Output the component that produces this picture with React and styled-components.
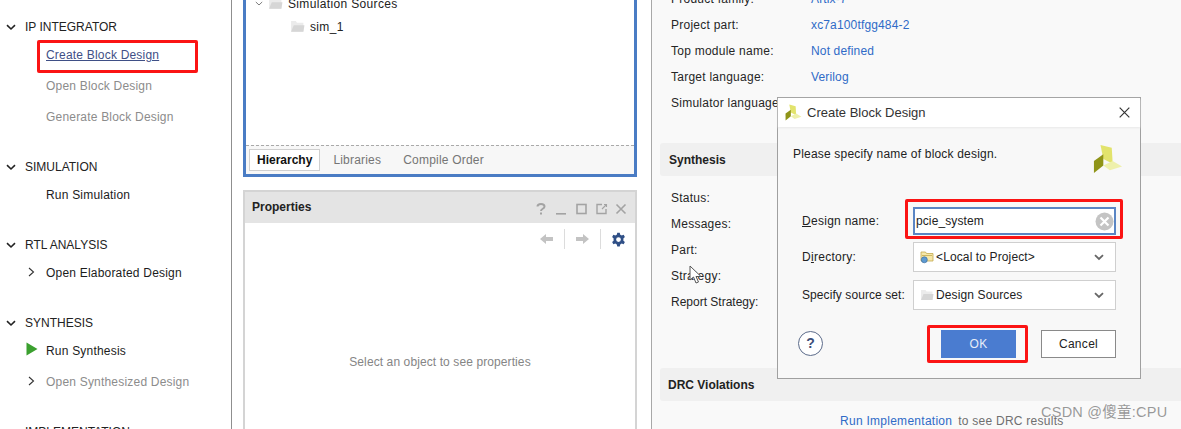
import React from "react";
import styled, { createGlobalStyle } from "styled-components";

const Global = createGlobalStyle`
  html, body { margin: 0; padding: 0; background: #fff; }
  body { font-family: "Liberation Sans", Arial, sans-serif; font-size: 12px; color: #222; }
`;

const Page = styled.div`
  position: relative;
  width: 1181px;
  height: 429px;
  overflow: hidden;
  display: grid;
  grid-template-columns: 232px 420px 1fr;
`;

/* ---------- flow navigator ---------- */
const Nav = styled.nav`
  border-right: 1px solid #8f8f8f;
  background: #fff;
  padding-top: 14px;
  display: flex;
  flex-direction: column;
  gap: 21px;
  overflow: hidden;
`;
const NavSection = styled.section`
  display: flex;
  flex-direction: column;
  flex: none;
`;
const NavHeader = styled.div`
  height: 26px;
  display: flex;
  align-items: center;
  gap: 9px;
  padding-left: 6px;
  font-size: 12px;
  color: #222;
`;
const NavItem = styled.div`
  height: 31px;
  box-sizing: border-box;
  display: flex;
  align-items: center;
  position: relative;
  padding: 0 0 2px 46px;
  font-size: 12px;
  letter-spacing: 0.2px;
  color: ${(p) => (p.$muted ? "#8c8c8c" : p.$link ? "#3f4f86" : "#1c1c1c")};
  text-decoration: ${(p) => (p.$link ? "underline" : "none")};
`;
const ItemIcon = styled.span`
  position: absolute;
  left: ${(p) => p.$left || 26}px;
  top: ${(p) => p.$top || 9}px;
  display: flex;
`;
const RedBox = styled.span`
  position: absolute;
  left: ${(p) => p.$l}px;
  top: ${(p) => p.$t}px;
  width: ${(p) => p.$w}px;
  height: ${(p) => p.$h}px;
  box-sizing: border-box;
  border: 3px solid #fb1414;
  border-radius: 2px;
  pointer-events: none;
`;

/* ---------- centre column ---------- */
const Middle = styled.div`
  border-right: 1px solid #a8a8a8;
  background: #fff;
  padding: 0 14px 0 11px;
  display: flex;
  flex-direction: column;
  gap: 13px;
`;
const SourcesPanel = styled.div`
  height: 177px;
  box-sizing: border-box;
  border: 3px solid #4a7cc4;
  border-top: none;
  background: #fff;
  display: flex;
  flex-direction: column;
`;
const Tree = styled.div`
  flex: 1;
  margin-top: -8px;
  font-size: 12px;
  letter-spacing: 0.35px;
`;
const TreeRow = styled.div`
  height: 23px;
  display: flex;
  align-items: center;
  gap: 5px;
  padding-left: ${(p) => p.$indent}px;
  color: #222;
`;
const TabBar = styled.div`
  height: 29px;
  background: #f7f7f7;
  border-top: 1px dashed #a9a9a9;
  display: flex;
  align-items: center;
  padding-left: 3px;
  gap: 13px;
  box-sizing: border-box;
`;
const Tab = styled.div`
  font-size: 12px;
  letter-spacing: 0.2px;
  color: ${(p) => (p.$active ? "#111" : "#757575")};
  font-weight: ${(p) => (p.$active ? 700 : 400)};
  ${(p) =>
    p.$active
      ? `background:#fff;border:1px solid #cfcfcf;padding:3px 7px;letter-spacing:0;`
      : `padding:3px 0;margin-right:9px;`}
`;
const PropsPanel = styled.div`
  flex: 1;
  min-height: 0;
  box-sizing: border-box;
  border: 2px solid #d4d4d4;
  border-bottom: none;
  display: flex;
  flex-direction: column;
`;
const PropsHead = styled.div`
  height: 31px;
  box-sizing: border-box;
  background: #e4e4e4;
  display: flex;
  align-items: center;
  justify-content: space-between;
  padding: 0 7px 2px 7px;
  font-weight: 700;
  font-size: 12px;
  color: #222;
`;
const HeadIcons = styled.div`
  display: flex;
  align-items: center;
  gap: 4px;
  margin-top: 5px;
  & > svg:first-child {
    margin-right: 2px;
  }
`;
const PropsTools = styled.div`
  height: 32px;
  display: flex;
  align-items: center;
  justify-content: flex-end;
  padding-right: 9px;
`;
const ToolSep = styled.span`
  width: 1px;
  height: 20px;
  background: #dcdcdc;
  margin: 0 10px;
`;
const PropsEmpty = styled.div`
  flex: 1;
  text-align: center;
  padding-top: 100px;
  letter-spacing: 0.1px;
  color: #858585;
`;

/* ---------- summary column ---------- */
const Summary = styled.div`
  background: #f9f9f9;
  padding: 0 0 0 8px;
  margin-top: -14px;
  display: flex;
  flex-direction: column;
`;
const InfoRow = styled.div`
  height: 26px;
  display: flex;
  align-items: center;
  padding-left: 11px;
  letter-spacing: ${(p) => (p.$tight ? "0" : "0.25px")};
  color: #262626;
`;
const InfoLabel = styled.span`
  width: 140px;
  flex: none;
`;
const InfoValue = styled.span`
  letter-spacing: ${(p) => p.$spacing || "0.15px"};
  color: #2f6bc7;
`;
const Band = styled.div`
  height: 33px;
  margin-top: ${(p) => p.$mt}px;
  margin-bottom: ${(p) => p.$mb || 0}px;
  background: #f0f0f0;
  border-radius: 3px 0 0 3px;
  display: flex;
  align-items: center;
  padding-left: ${(p) => p.$pl || 9}px;
  font-weight: 700;
  color: #222;
`;
const DrcLine = styled.div`
  padding-left: 180px;
  margin-top: 13px;
  display: flex;
  align-items: baseline;
  gap: 6px;
  letter-spacing: 0.25px;
  color: #6f6f6f;
`;

/* ---------- dialog ---------- */
const Dialog = styled.div`
  position: absolute;
  left: 777px;
  top: 97px;
  width: 364px;
  height: 282px;
  box-sizing: border-box;
  border: 1px solid #a0a0a0;
  background: #f8f8f8;
  display: flex;
  flex-direction: column;
`;
const DialogTitle = styled.div`
  height: 29px;
  background: #fff;
  display: flex;
  align-items: center;
  gap: 5px;
  padding: 0 8px 0 7px;
  font-size: 13px;
  color: #333;
  box-shadow: 0 1px 2px #e8e8e8;
`;
const TitleText = styled.span`
  flex: 1;
`;
const DialogBody = styled.div`
  flex: 1;
  padding: 20px 24px 0 15px;
  display: flex;
  flex-direction: column;
`;
const Intro = styled.div`
  display: flex;
  justify-content: space-between;
  height: 59px;
  letter-spacing: 0.19px;
  color: #222;
`;
const BigLogo = styled.span`
  margin: -3px -7px 0 0;
`;
const FormRow = styled.div`
  display: flex;
  align-items: center;
  height: 30px;
  margin-bottom: ${(p) => p.$mb ?? 8}px;
  padding-left: 9px;
`;
const FormLabel = styled.label`
  width: 111px;
  flex: none;
  letter-spacing: ${(p) => (p.$tight ? "0.08px" : "0.28px")};
  color: #222;
`;
const Mnemonic = styled.span`
  text-decoration: underline;
`;
const TextField = styled.div`
  flex: 1;
  height: 28px;
  box-sizing: border-box;
  border: 2px solid #5a85c4;
  background: #fff;
  display: flex;
  align-items: center;
  justify-content: space-between;
  padding: 0 0 0 1px;
  letter-spacing: 0.1px;
  color: #222;
`;
const Select = styled.div`
  flex: 1;
  height: 30px;
  box-sizing: border-box;
  border: 1px solid #cfcfcf;
  background: #fff;
  display: flex;
  align-items: center;
  gap: 2px;
  padding: 0 11px 0 6px;
  letter-spacing: 0.12px;
  color: #222;
`;
const SelectText = styled.span`
  flex: 1;
`;
const Buttons = styled.div`
  display: flex;
  align-items: center;
  margin-top: 12px;
  padding-left: 5px;
`;
const HelpButton = styled.div`
  width: 25px;
  height: 25px;
  box-sizing: border-box;
  border-radius: 50%;
  border: 1.5px solid #5c6b8a;
  background: #fff;
  color: #3d4f79;
  font-weight: 700;
  font-size: 14px;
  display: flex;
  align-items: center;
  justify-content: center;
  margin: 0 auto 2px 0;
`;
const OkButton = styled.div`
  width: 75px;
  height: 28px;
  background: #4a7cd0;
  color: #e6edf8;
  display: flex;
  align-items: center;
  justify-content: center;
  letter-spacing: 0.3px;
  margin-right: 25px;
`;
const CancelButton = styled.div`
  width: 75px;
  height: 28px;
  box-sizing: border-box;
  border: 1px solid #8a8a8a;
  background: #fff;
  color: #222;
  display: flex;
  align-items: center;
  justify-content: center;
  letter-spacing: 0.3px;
`;

/* ---------- overlays ---------- */
const Watermark = styled.div`
  position: absolute;
  left: 1041px;
  top: 400px;
  font-family: "Liberation Sans", "Noto Sans CJK SC", sans-serif;
  font-size: 14.5px;
  letter-spacing: 0.25px;
  color: rgba(125, 125, 125, 0.78);
  white-space: nowrap;
`;
const Cursor = styled.svg`
  position: absolute;
  left: 689px;
  top: 265px;
`;

/* ---------- drawings ---------- */
const ChevronDown = ({ size = 10, color = "#222", w = 1.6 }) => (
  <svg width={size} height={size * 0.7} viewBox="0 0 10 7" fill="none">
    <path d="M1 1.2 L5 5 L9 1.2" stroke={color} strokeWidth={w} />
  </svg>
);
const ChevronRight = () => (
  <svg width="7" height="10" viewBox="0 0 7 10" fill="none">
    <path d="M1 1 L5.5 5 L1 9" stroke="#333" strokeWidth="1.1" />
  </svg>
);
const Play = () => (
  <svg width="12" height="14" viewBox="0 0 12 14">
    <path d="M0.5 0.5 L11.5 7 L0.5 13.5 Z" fill="#3ba02f" />
  </svg>
);
const Folder = ({ w = 15 }) => (
  <svg width={w} height={w * 0.86} viewBox="0 0 14 12">
    <path d="M1 1 H5.5 L6.5 2.5 H12.5 V11 H1 Z" fill="#ebebeb" />
    <path d="M3.5 5 H13.5 L12.5 11 H1 Z" fill="#d6d6d6" />
  </svg>
);
const LocalFolder = () => (
  <svg width="14" height="14" viewBox="0 0 14 14">
    <path d="M1 2 H5.5 L6.5 3.5 H13 V11 H1 Z" fill="#f6e7a8" stroke="#c4a94e" strokeWidth="0.8" />
    <path d="M2 5.5 H12" stroke="#c4a94e" strokeWidth="0.8" />
    <circle cx="4.3" cy="9.8" r="3" fill="#5d9ad2" stroke="#3e6f9f" strokeWidth="0.7" />
  </svg>
);
const XLogo = ({ size }) => (
  <svg width={size} height={size} viewBox="0 0 30 32">
    <path d="M7 1 L19 4 L20 21 L10 16 Z" fill="#e2e36c" />
    <path d="M10 23 L20 18 L30 24 L17 28 Z" fill="#eef0ac" />
    <path d="M0 18 L10 11 L10 23 L0 31 Z" fill="#8f9418" />
  </svg>
);
const Gray = "#a3a3a3";
const HelpMark = () => (
  <svg width="14" height="14" viewBox="0 0 14 14" fill="none">
    <path d="M3.5 4.5 C3.5 1 10.5 1 10.5 4.5 C10.5 7 7 6.5 7 9" stroke={Gray} strokeWidth="2" />
    <rect x="6" y="10.5" width="2" height="2" fill={Gray} />
  </svg>
);
const MinIcon = () => (
  <svg width="16" height="14" viewBox="0 0 16 14">
    <rect x="2" y="11" width="10" height="1.6" fill={Gray} />
  </svg>
);
const MaxIcon = () => (
  <svg width="16" height="14" viewBox="0 0 16 14" fill="none">
    <rect x="3" y="2.5" width="9" height="9" stroke={Gray} strokeWidth="1.6" />
  </svg>
);
const PopIcon = () => (
  <svg width="16" height="14" viewBox="0 0 16 14" fill="none">
    <path d="M8 2.5 H3 V11.5 H12 V7" stroke={Gray} strokeWidth="1.4" />
    <path d="M8 7 L12.5 2.5 M10 2.5 H12.5 V5" stroke={Gray} strokeWidth="1.1" />
  </svg>
);
const CloseIcon = ({ c = Gray, w = 1.6, size = 14 }) => (
  <svg width={size} height={size} viewBox="0 0 14 14" fill="none">
    <path d="M2.5 2.5 L11.5 11.5 M11.5 2.5 L2.5 11.5" stroke={c} strokeWidth={w} />
  </svg>
);
const ArrowIcon = ({ flip }) => (
  <svg width="15" height="12" viewBox="0 0 15 12" style={flip ? { transform: "scaleX(-1)" } : undefined}>
    <path d="M1 6 L7 1 V4 H14 V8 H7 V11 Z" fill="#c3c3c3" />
  </svg>
);
const Gear = () => (
  <svg width="15" height="15" viewBox="0 0 24 24">
    <path
      fill="#2f4f86"
      fillRule="evenodd"
      d="M10 1 H14 L14.7 4.2 C15.6 4.5 16.4 5 17.1 5.5 L20.2 4.5 L22.2 8 L19.8 10.2 C19.9 11 19.9 13 19.8 13.8 L22.2 16 L20.2 19.5 L17.1 18.5 C16.4 19 15.6 19.5 14.7 19.8 L14 23 H10 L9.3 19.8 C8.4 19.5 7.6 19 6.9 18.5 L3.8 19.5 L1.8 16 L4.2 13.8 C4.1 13 4.1 11 4.2 10.2 L1.8 8 L3.8 4.5 L6.9 5.5 C7.6 5 8.4 4.5 9.3 4.2 Z M12 8.2 A3.8 3.8 0 1 0 12 15.8 A3.8 3.8 0 1 0 12 8.2 Z"
    />
  </svg>
);
const ClearIcon = () => (
  <svg width="19" height="19" viewBox="0 0 19 19">
    <circle cx="9.5" cy="9.5" r="9" fill="#c4c4c4" />
    <path d="M5.5 5.5 L13.5 13.5 M13.5 5.5 L5.5 13.5" stroke="#fff" strokeWidth="2.2" />
  </svg>
);

const sections = [
  {
    title: "IP INTEGRATOR",
    items: [
      { label: "Create Block Design", link: true },
      { label: "Open Block Design", muted: true },
      { label: "Generate Block Design", muted: true },
    ],
  },
  { title: "SIMULATION", items: [{ label: "Run Simulation" }] },
  { title: "RTL ANALYSIS", items: [{ label: "Open Elaborated Design", arrow: true }] },
  {
    title: "SYNTHESIS",
    items: [{ label: "Run Synthesis", play: true }, { label: "Open Synthesized Design", muted: true, arrow: true }],
  },
  { title: "IMPLEMENTATION", items: [] },
];

export default function App() {
  return (
    <Page>
      <Global />
      <Nav>
        {sections.map((s) => (
          <NavSection key={s.title}>
            <NavHeader>
              <ChevronDown />
              {s.title}
            </NavHeader>
            {s.items.map((it) => (
              <NavItem key={it.label} $muted={it.muted} $link={it.link}>
                {it.arrow && (
                  <ItemIcon $left={28} $top={9}>
                    <ChevronRight />
                  </ItemIcon>
                )}
                {it.play && (
                  <ItemIcon $left={26} $top={6}>
                    <Play />
                  </ItemIcon>
                )}
                {it.label}
              </NavItem>
            ))}
          </NavSection>
        ))}
      </Nav>

      <Middle>
        <SourcesPanel>
          <Tree>
            <TreeRow $indent={9}>
              <ChevronDown size={8} color="#777" w={1.2} />
              <Folder />
              Simulation Sources
            </TreeRow>
            <TreeRow $indent={44}>
              <Folder />
              sim_1
            </TreeRow>
          </Tree>
          <TabBar>
            <Tab $active>Hierarchy</Tab>
            <Tab>Libraries</Tab>
            <Tab>Compile Order</Tab>
          </TabBar>
        </SourcesPanel>
        <PropsPanel>
          <PropsHead>
            Properties
            <HeadIcons>
              <HelpMark />
              <MinIcon />
              <MaxIcon />
              <PopIcon />
              <CloseIcon />
            </HeadIcons>
          </PropsHead>
          <PropsTools>
            <ArrowIcon />
            <ToolSep />
            <ArrowIcon flip />
            <ToolSep />
            <Gear />
          </PropsTools>
          <PropsEmpty>Select an object to see properties</PropsEmpty>
        </PropsPanel>
      </Middle>

      <Summary>
        <InfoRow>
          <InfoLabel>Product family:</InfoLabel>
          <InfoValue>Artix-7</InfoValue>
        </InfoRow>
        <InfoRow>
          <InfoLabel>Project part:</InfoLabel>
          <InfoValue>xc7a100tfgg484-2</InfoValue>
        </InfoRow>
        <InfoRow>
          <InfoLabel>Top module name:</InfoLabel>
          <InfoValue>Not defined</InfoValue>
        </InfoRow>
        <InfoRow>
          <InfoLabel>Target language:</InfoLabel>
          <InfoValue>Verilog</InfoValue>
        </InfoRow>
        <InfoRow>
          <InfoLabel>Simulator language:</InfoLabel>
          <InfoValue>Mixed</InfoValue>
        </InfoRow>
        <Band $mt={27} $mb={9}>Synthesis</Band>
        <InfoRow>Status:</InfoRow>
        <InfoRow>Messages:</InfoRow>
        <InfoRow>Part:</InfoRow>
        <InfoRow>Strategy:</InfoRow>
        <InfoRow $tight>Report Strategy:</InfoRow>
        <Band $mt={53} $pl={8}>DRC Violations</Band>
        <DrcLine>
          <InfoValue $spacing="0.27px">Run Implementation</InfoValue> to see DRC results
        </DrcLine>
      </Summary>

      <Dialog>
        <DialogTitle>
          <XLogo size={17} />
          <TitleText>Create Block Design</TitleText>
          <CloseIcon c="#333" w={1.1} size={15} />
        </DialogTitle>
        <DialogBody>
          <Intro>
            Please specify name of block design.
            <BigLogo>
              <XLogo size={30} />
            </BigLogo>
          </Intro>
          <FormRow $mb={6}>
            <FormLabel>
              <Mnemonic>D</Mnemonic>esign name:
            </FormLabel>
            <TextField>
              pcie_system
              <ClearIcon />
            </TextField>
          </FormRow>
          <FormRow>
            <FormLabel>
              D<Mnemonic>i</Mnemonic>rectory:
            </FormLabel>
            <Select>
              <LocalFolder />
              <SelectText>&lt;Local to Project&gt;</SelectText>
              <ChevronDown color="#666" w={1.8} />
            </Select>
          </FormRow>
          <FormRow>
            <FormLabel $tight>Specify source set:</FormLabel>
            <Select>
              <Folder w={14} />
              <SelectText>Design Sources</SelectText>
              <ChevronDown color="#666" w={1.8} />
            </Select>
          </FormRow>
          <Buttons>
            <HelpButton>?</HelpButton>
            <OkButton>OK</OkButton>
            <CancelButton>Cancel</CancelButton>
          </Buttons>
        </DialogBody>
      </Dialog>

      <RedBox $l={37} $t={40} $w={161} $h={33} />
      <RedBox $l={905} $t={199} $w={218} $h={40} />
      <RedBox $l={927} $t={325} $w={101} $h={38} />

      <Cursor width="14" height="20" viewBox="0 0 14 20">
        <path d="M1 1 V15 L4.5 12 L7 18 L9.5 17 L7 11.5 L12 11.5 Z" fill="#fff" stroke="#555" strokeWidth="1" />
      </Cursor>
      <Watermark>CSDN @傻童:CPU</Watermark>
    </Page>
  );
}
